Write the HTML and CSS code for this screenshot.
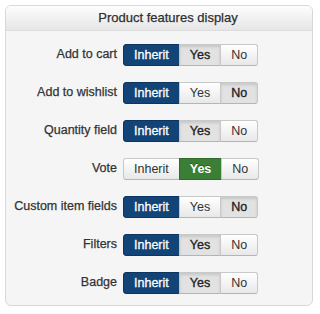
FILE: index.html
```html
<!DOCTYPE html>
<html>
<head>
<meta charset="utf-8">
<link rel="stylesheet" href="styles.css">
</head>
<body>
<div class="panel">
  <div class="panel-head">Product features display</div>
  <div class="panel-body">
    <div class="label">Add to cart</div>
    <div class="group"><span class="btn on-blue">Inherit</span><span class="btn pressed">Yes</span><span class="btn">No</span></div>
    <div class="label">Add to wishlist</div>
    <div class="group"><span class="btn on-blue">Inherit</span><span class="btn">Yes</span><span class="btn pressed">No</span></div>
    <div class="label">Quantity field</div>
    <div class="group"><span class="btn on-blue">Inherit</span><span class="btn pressed">Yes</span><span class="btn">No</span></div>
    <div class="label">Vote</div>
    <div class="group"><span class="btn">Inherit</span><span class="btn on-green">Yes</span><span class="btn">No</span></div>
    <div class="label">Custom item fields</div>
    <div class="group"><span class="btn on-blue">Inherit</span><span class="btn">Yes</span><span class="btn pressed">No</span></div>
    <div class="label">Filters</div>
    <div class="group"><span class="btn on-blue">Inherit</span><span class="btn pressed">Yes</span><span class="btn">No</span></div>
    <div class="label">Badge</div>
    <div class="group"><span class="btn on-blue">Inherit</span><span class="btn pressed">Yes</span><span class="btn">No</span></div>
  </div>
</div>
</body>
</html>
```

FILE: styles.css
```css
html, body {
  margin: 0;
  padding: 0;
  background: #ffffff;
}
body {
  font-family: "Liberation Sans", Arial, sans-serif;
  color: #333333;
}
.panel {
  margin: 5px 0 0 5px;
  width: 306px;
  border: 1px solid #d8d8d8;
  border-radius: 6px;
  background: #f5f5f5;
  overflow: hidden;
}
.panel-head {
  height: 24px;
  line-height: 24px;
  text-align: center;
  padding-left: 18px;
  font-size: 13px;
  color: #2f2f2f;
  -webkit-text-stroke: 0.25px #2f2f2f;
  background: linear-gradient(#fdfdfd, #e6e6e6);
  border-bottom: 1px solid #dcdcdc;
}
.panel-body {
  display: grid;
  grid-template-columns: 111px auto;
  column-gap: 6px;
  row-gap: 16px;
  padding: 13px 0 11px 0;
  align-items: center;
}
.label {
  text-align: right;
  font-size: 12.5px;
  line-height: 16px;
  color: #333333;
  -webkit-text-stroke: 0.25px #333333;
  margin-bottom: 2px;
  white-space: nowrap;
}
.group {
  display: flex;
  justify-self: start;
}
.btn {
  height: 20px;
  line-height: 20px;
  padding: 0 10px;
  font-size: 12.5px;
  color: #333333;
  background: linear-gradient(#ffffff, #e8e8e8);
  border: 1px solid #c8c8c8;
  border-bottom-color: #b5b5b5;
  margin-left: -1px;
}
.btn:first-child {
  margin-left: 0;
  border-radius: 3px 0 0 3px;
}
.btn:last-child {
  border-radius: 0 3px 3px 0;
}
.btn.pressed {
  background: #e2e2e2;
  box-shadow: inset 0 2px 3px rgba(0, 0, 0, 0.12);
  color: #222222;
  -webkit-text-stroke: 0.35px #222222;
}
.btn.on-blue {
  background: #124477;
  border-color: #0d3560;
  color: #ffffff;
  -webkit-text-stroke: 0.3px #ffffff;
  text-shadow: 0 -1px 0 rgba(0, 0, 0, 0.3);
}
.btn.on-green {
  background: #3a7f35;
  border-color: #2f6a2b;
  color: #ffffff;
  font-weight: bold;
  text-shadow: 0 -1px 0 rgba(0, 0, 0, 0.3);
}
```
